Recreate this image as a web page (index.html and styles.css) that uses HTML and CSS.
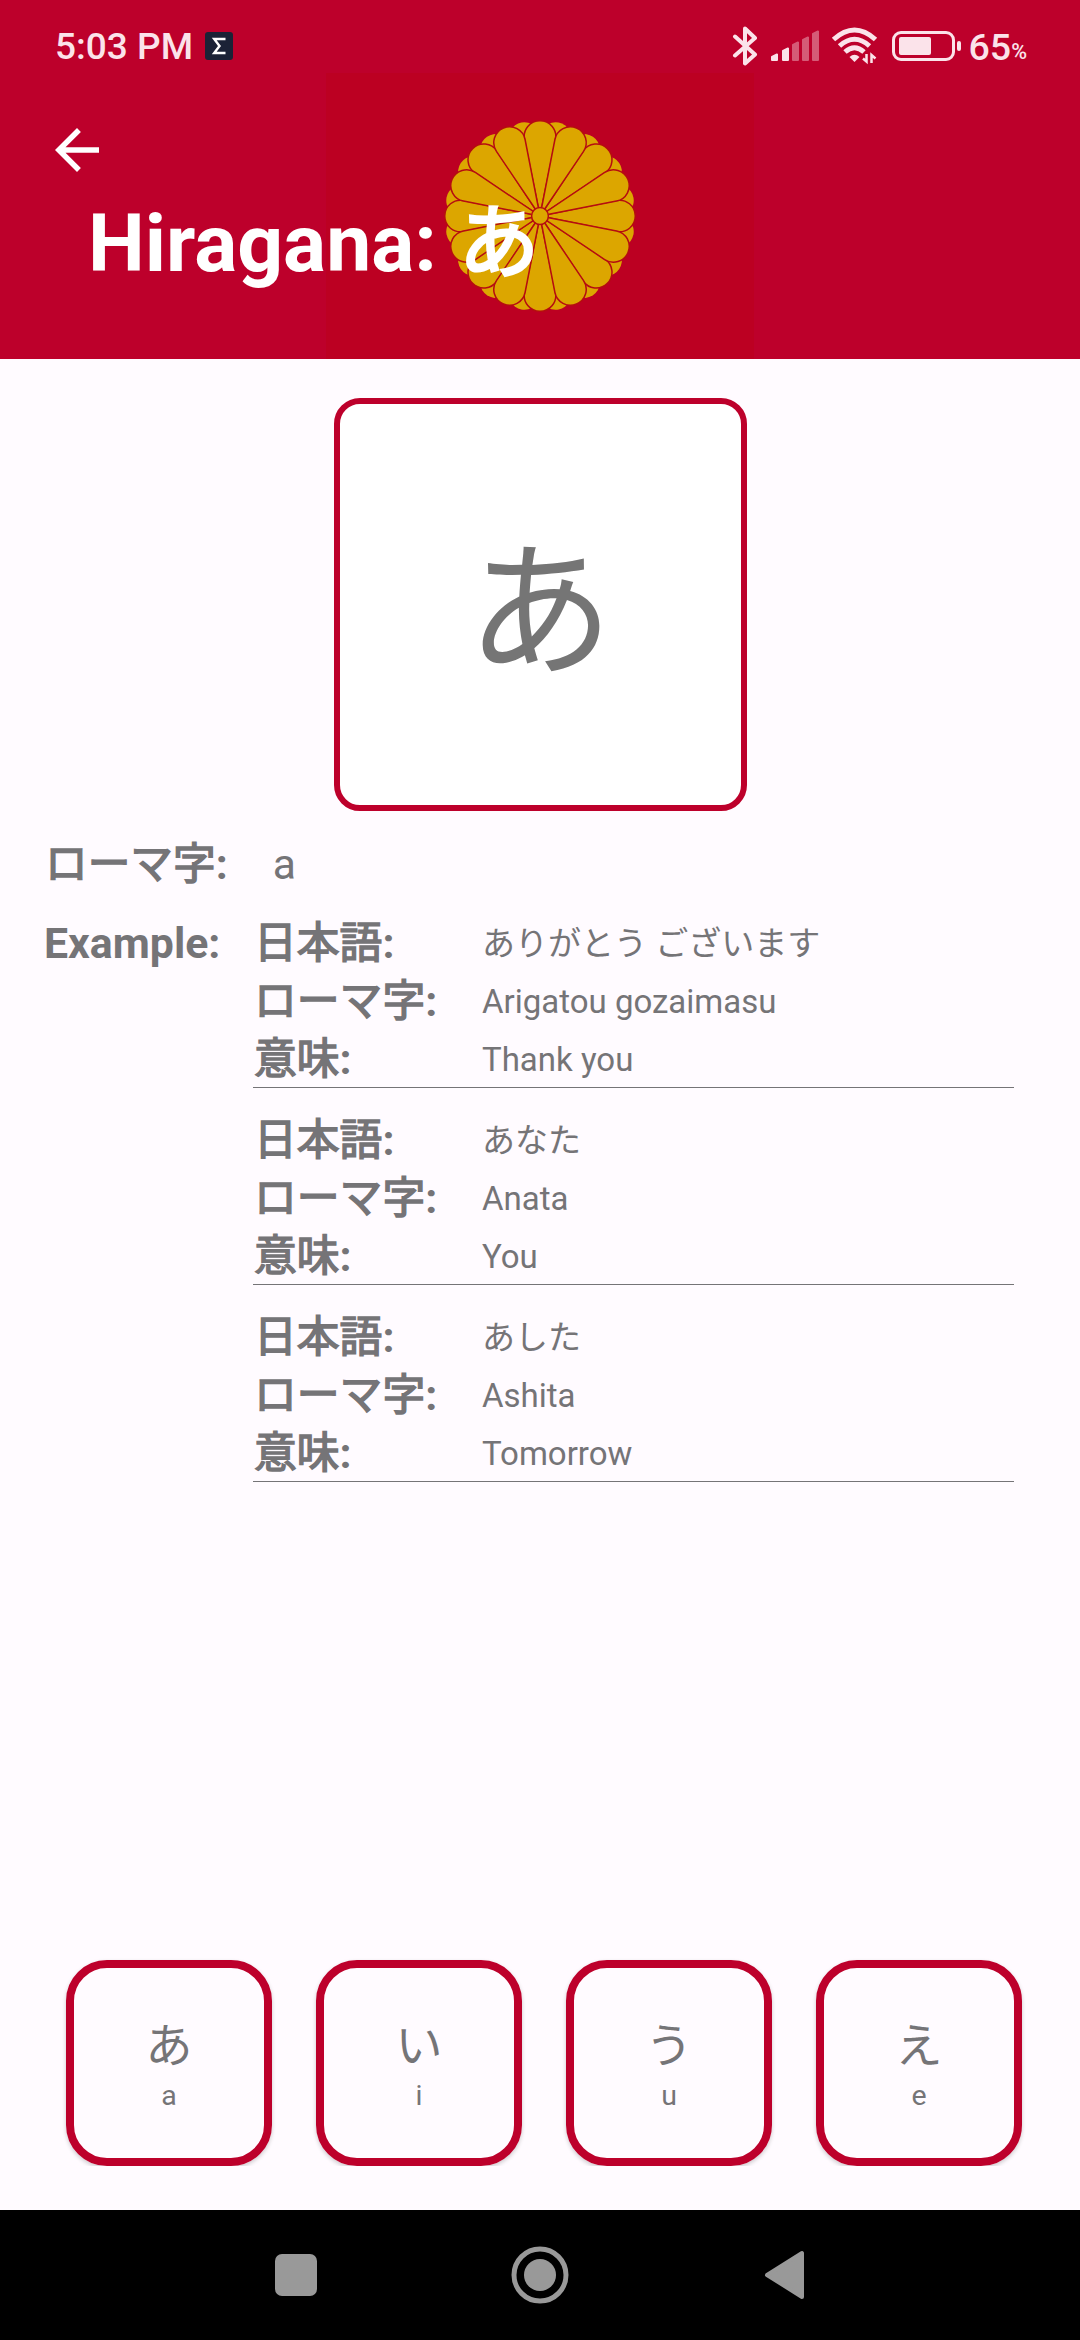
FILE: index.html
```html
<!DOCTYPE html>
<html lang="en">
<head>
<meta charset="utf-8">
<title>Hiragana</title>
<link rel="stylesheet" href="styles.css">
</head>
<body>
<div class="screen">
  <header class="header">
    <div class="crest-panel">
      <svg class="crest" viewBox="-96 -96 192 192" width="192" height="192">
        <defs>
          <path id="petal" d="M0 0L-15.5 -76.4A15.8 15.8 0 1 1 15.5 -76.4Z"/>
          <g id="pair"><use href="#petal"/><use href="#petal" transform="rotate(180)"/></g>
          <g id="quad"><use href="#pair"/><use href="#pair" transform="rotate(90)"/></g>
          <g id="oct"><use href="#quad"/><use href="#quad" transform="rotate(45)"/></g>
          <g id="ring"><use href="#oct"/><use href="#oct" transform="rotate(22.5)"/></g>
        </defs>
        <use href="#ring" class="petal-back" transform="rotate(11.25)"/>
        <use href="#ring" class="petal-front"/>
        <circle class="petal-front" r="8.4"/>
      </svg>
    </div>
    <div class="status">
      <span class="clock">5:03 PM</span>
      <svg class="app-badge" viewBox="0 0 28 28" width="28" height="28">
        <rect width="28" height="28" rx="3" fill="#1b2236"/>
        <path d="M20.5 7H9.2L14.5 14L9.2 21H20.5" fill="none" stroke="#fff" stroke-width="2.4"/>
      </svg>
      <div class="status-icons">
        <svg class="bluetooth" viewBox="0 0 26 40" width="26" height="40"><path d="M3 10.500L23 28.500L13 37.500V2.500L23 12L3 29.500"/></svg>
        <svg class="signal" viewBox="0 0 48 32" width="48" height="32">
          <path d="M1 30V27L6 24.500V30Z"/><path d="M12 30V21L17 18.500V30Z"/>
          <g opacity=".4"><path d="M22 30V15L27 12.500V30Z"/><path d="M32 30V10L37 7.500V30Z"/><path d="M42 30V4L47 1.500V30Z"/></g>
        </svg>
        <svg class="wifi" viewBox="0 0 48 38" width="48" height="38">
          <path class="arc" d="M2.500 12.500Q23.500 -6.500 44.500 12.500M8.500 19Q23.500 5.500 38.500 19M14 25Q23.500 16.500 33 25"/>
          <path d="M18.500 30Q23.500 25.500 28.500 30L23.500 35Z"/>
          <path class="traffic" d="M35.500 27V34.500L32 31.500M40.500 36V28L44.500 31.500"/>
        </svg>
        <svg class="battery" viewBox="0 0 70 30" width="70" height="30">
          <rect x="1.500" y="1.500" width="60" height="27" rx="7.500" fill="none" stroke="#fbe3ea" stroke-width="3"/>
          <rect x="7" y="6" width="32" height="18" rx="2"/><rect x="65" y="10" width="4" height="10" rx="2"/>
        </svg>
        <span class="level">65</span><span class="percent">%</span>
      </div>
    </div>
    <svg class="back" viewBox="0 0 24 24" width="66" height="66"><path d="M20 11H7.830l5.590-5.590L12 4l-8 8 8 8 1.410-1.410L7.830 13H20v-2z"/></svg>
    <h1 class="title">Hiragana: <span class="title-kana" lang="ja">あ</span></h1>
  </header>

  <main class="main">
    <div class="kana-card" lang="ja">あ</div>
    <div class="romaji"><span class="label" lang="ja">ローマ字<b>:</b></span><span>a</span></div>
    <div class="examples">
      <b class="examples-label">Example:</b>
      <div class="example-list" lang="ja">
        <dl class="example"><dt class="label">日本語<b>:</b></dt><dd>ありがとう ございます</dd><dt class="label">ローマ字<b>:</b></dt><dd>Arigatou gozaimasu</dd><dt class="label">意味<b>:</b></dt><dd>Thank you</dd></dl>
        <dl class="example"><dt class="label">日本語<b>:</b></dt><dd>あなた</dd><dt class="label">ローマ字<b>:</b></dt><dd>Anata</dd><dt class="label">意味<b>:</b></dt><dd>You</dd></dl>
        <dl class="example"><dt class="label">日本語<b>:</b></dt><dd>あした</dd><dt class="label">ローマ字<b>:</b></dt><dd>Ashita</dd><dt class="label">意味<b>:</b></dt><dd>Tomorrow</dd></dl>
      </div>
    </div>
    <div class="tiles">
      <div class="tile"><span class="kana" lang="ja">あ</span><span class="sound">a</span></div>
      <div class="tile"><span class="kana" lang="ja">い</span><span class="sound">i</span></div>
      <div class="tile"><span class="kana" lang="ja">う</span><span class="sound">u</span></div>
      <div class="tile"><span class="kana" lang="ja">え</span><span class="sound">e</span></div>
    </div>
  </main>

  <nav class="navbar">
    <svg viewBox="0 0 60 60" width="60" height="60"><rect x="9" y="9" width="42" height="42" rx="7"/></svg>
    <svg viewBox="0 0 60 60" width="60" height="60"><circle cx="30" cy="30" r="26" fill="none" stroke="#999" stroke-width="5"/><circle cx="30" cy="30" r="16"/></svg>
    <svg viewBox="0 0 60 60" width="60" height="60"><path d="M13 30L48 8V52Z" stroke="#999" stroke-width="4" stroke-linejoin="round"/></svg>
  </nav>
</div>
</body>
</html>
```
FILE: styles.css
```css
* { box-sizing: border-box; }
body, h1, dl, dd { margin: 0; }
body { font-family: Roboto, "Noto Sans CJK JP", sans-serif; color: #757477; }
.screen { width: 1080px; height: 2340px; display: flex; flex-direction: column; background: #fffbff; }

.header { position: relative; height: 359px; background: #bd002b; color: #fff; }
.crest-panel { position: absolute; left: 326px; top: 73px; width: 428px; height: 286px; display: flex; justify-content: center; align-items: center; background: #bc0022; }
.crest { display: block; }
.petal-back { fill: #dca600; }
.petal-front { fill: #dca600; stroke: #b50d10; stroke-width: 1.5; }

.status { position: relative; height: 92px; padding: 0 53px 0 55px; display: flex; align-items: center; color: #fbe3ea; font-weight: 500; }
.clock { font-size: 37px; line-height: 92px; padding-top: 2px; }
.app-badge { margin-left: 12px; }
.status-icons { margin-left: auto; display: flex; align-items: center; fill: #fbe3ea; }
.bluetooth path { fill: none; stroke: #fbe3ea; stroke-width: 4; stroke-linejoin: round; stroke-linecap: round; }
.signal { margin-left: 13px; stroke: #fbe3ea; stroke-width: 2; stroke-linejoin: round; }
.wifi { margin-left: 12px; }
.wifi .arc { fill: none; stroke: #fbe3ea; stroke-width: 5; }
.wifi .traffic { fill: none; stroke: #fbe3ea; stroke-width: 2.500; }
.battery { margin-left: 13px; }
.level { margin-left: 7px; font-size: 37.500px; padding-top: 2px; }
.percent { font-size: 21.500px; padding-top: 11px; }

.back { position: relative; display: block; margin: 25px 0 0 44px; fill: #fff; }
.title { position: relative; margin: 7px 0 0 88px; font-size: 80.400px; line-height: 108px; font-weight: 700; }
.title-kana { margin-left: 2px; font-weight: 400; -webkit-text-stroke: 2.800px #fff; }

.main { flex: 1; display: flex; flex-direction: column; padding: 39px 44px 44px; }
.kana-card { align-self: center; width: 413px; height: 413px; padding-top: 17px; display: flex; align-items: center; justify-content: center; background: #fff; border: 6px solid #bd002b; border-radius: 26px; color: #757575; font-size: 146.500px; line-height: 1; }
.romaji { display: flex; gap: 45px; height: 60px; margin-top: 23px; padding-left: 1px; font-size: 42.700px; line-height: 60px; }
.label { font-weight: 400; -webkit-text-stroke: 1.500px #757477; }
.label b { font-weight: 700; -webkit-text-stroke: 0; }
.examples { display: flex; margin-top: 19px; line-height: 60px; font-size: 42.800px; }
.examples-label { width: 209px; white-space: nowrap; }
.example-list { width: 761px; display: flex; flex-direction: column; gap: 22px; }
.example { display: grid; grid-template-columns: 229px 1fr; grid-auto-rows: 58px; border-bottom: 1px solid #757477; }
.example dt { padding-left: 1px; }
.example dd { font-size: 33px; line-height: 61px; }
.tiles { margin-top: auto; display: flex; gap: 44px; padding-left: 22px; }
.tile { width: 206px; height: 206px; display: flex; flex-direction: column; align-items: center; padding-top: 46px; border: 8px solid #bd002b; border-radius: 41px; box-shadow: 0 2px 4px rgba(0, 0, 0, .2); clip-path: inset(-4px -4px 0 -4px); }
.kana { font-size: 47px; line-height: 64px; }
.sound { font-size: 28.500px; line-height: 36px; }

.navbar { height: 130px; display: flex; justify-content: center; gap: 184px; align-items: center; background: #000; fill: #999; }
```
